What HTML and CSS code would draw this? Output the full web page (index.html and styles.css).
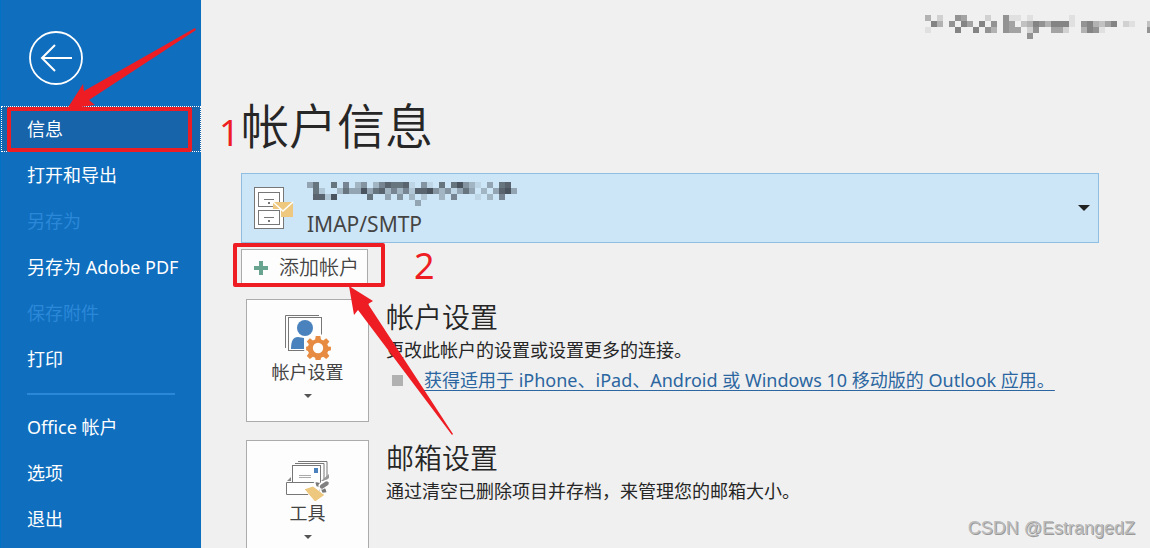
FILE: index.html
```html
<!DOCTYPE html>
<html lang="zh-CN">
<head>
    <meta charset="UTF-8">
    <meta name="viewport" content="width=device-width, initial-scale=1.0">
    <title>帐户信息 - Outlook</title>
    <link rel="stylesheet" href="styles.css">
</head>
<body>
    <div class="page">
        <nav class="sidebar">
            <button class="back-button" type="button" aria-label="返回">
                <svg width="54" height="54" viewBox="0 0 54 54" fill="none" stroke="#fff">
                    <circle cx="27" cy="27" r="26" stroke-width="1.8"/>
                    <path d="M43 27H13M26 14L13 27l13 13" stroke-width="2"/>
                </svg>
            </button>
            <a href="#" class="nav-item active">信息<span class="mark mark-info"></span></a>
            <a href="#" class="nav-item">打开和导出</a>
            <a class="nav-item disabled">另存为</a>
            <a href="#" class="nav-item">另存为 Adobe PDF</a>
            <a class="nav-item disabled">保存附件</a>
            <a href="#" class="nav-item">打印</a>
            <hr class="nav-divider">
            <a href="#" class="nav-item">Office 帐户</a>
            <a href="#" class="nav-item">选项</a>
            <a href="#" class="nav-item">退出</a>
        </nav>

        <main class="content">
            <header class="window-header">
                <svg class="mosaic" id="user-mosaic" width="225" height="24" fill="#555"></svg>
            </header>

            <h1 class="title">帐户信息</h1>

            <button class="account-select" type="button">
                <svg width="40" height="44" viewBox="0 0 40 44" fill="none" stroke="#777">
                    <rect x=".5" y="1.5" width="29" height="41" fill="#fff"/>
                    <rect x="4.5" y="6.5" width="21" height="14"/>
                    <path d="M10 13.5h10"/>
                    <path d="M14 16h2v2h-2z" fill="#777" stroke="none"/>
                    <path d="M19 16h20v15H19z" fill="#edc87e" stroke="none"/>
                    <path d="M19 16l10 9 10-9" stroke="#fff" stroke-width="1.5"/>
                    <path d="M3 23h24v17H3z" fill="#fff" stroke="none"/>
                    <rect x="4.5" y="24.5" width="21" height="14"/>
                    <path d="M10 31.5h10"/>
                    <path d="M14 34h2v2h-2z" fill="#777" stroke="none"/>
                </svg>
                <span class="account-text">
                    <svg class="mosaic" id="account-mosaic" width="216" height="24" fill="#3c444c"></svg>
                    <span class="account-type">IMAP/SMTP</span>
                </span>
                <span class="caret caret-large"></span>
            </button>

            <div class="add-row">
                <button class="add-button" type="button">
                    <svg width="14" height="14" viewBox="0 0 14 14"><path d="M5 0h4v5h5v4H9v5H5V9H0V5h5z" fill="#68a490"/></svg>
                    添加帐户
                </button>
                <span class="mark mark-add"></span>
            </div>

            <section class="setting">
                <button class="tile" type="button">
                    <svg width="48" height="46" viewBox="0 0 48 46">
                        <path d="M1.5 34V1.5H35" fill="none" stroke="#777"/>
                        <rect x="4.5" y="3.5" width="33" height="33" fill="#fff" stroke="#777"/>
                        <circle cx="21" cy="14" r="8" fill="#4a82bd"/>
                        <path d="M7 35c0-8 2-12 7-12l6 1v11z" fill="#4a82bd"/>
                        <circle cx="34" cy="34" r="14" fill="#fdfdfd"/>
                        <path d="M31.5 21h5l.7 4 2.400 1 3.300-2.300 3.400 3.400L44 30.400l1 2.400 3 .2v4l-3 .7-1 2.300 2.300 3.300-3.400 3.300-3.300-2.300-2.400 1-.7 3.700h-5l-.7-3.700-2.400-1-3.300 2.300-3.400-3.300L24 40l-1-2.300-2-.7v-4l2-.6 1-2-2.300-3.300 3.400-3.400 3.300 2.300 2.400-1z" fill="#e68b41" transform="translate(2.8 3) scale(.92 .9)"/>
                        <circle cx="34" cy="34" r="5.2" fill="#fdfdfd"/>
                    </svg>
                    <span class="tile-label">帐户设置</span>
                    <span class="caret"></span>
                </button>
                <div class="setting-text">
                    <h2>帐户设置</h2>
                    <p>更改此帐户的设置或设置更多的连接。</p>
                    <ul class="links">
                        <li><a href="#">获得适用于 iPhone、iPad、Android 或 Windows 10 移动版的 Outlook 应用。</a></li>
                    </ul>
                </div>
            </section>

            <section class="setting">
                <button class="tile" type="button">
                    <svg width="44" height="46" viewBox="0 0 44 46" fill="none" stroke="#777">
                        <path d="M12 6.5h29V23M9 8.5h29V24" />
                        <rect x="6.5" y="10.5" width="28" height="17" fill="#fff"/>
                        <path d="M13 20.5h12M13 22.5h12" stroke="#aaa"/>
                        <path d="M28 13h4v5h-4z" fill="#4a82bd" stroke="none"/>
                        <path d="M1 26l4-4v4z" fill="#888" stroke="none"/>
                        <path d="M35 26l8-7v4l-4 3z" fill="#999" stroke="none"/>
                        <path d="M.5 27.5h33v12H.5z" fill="#fff"/>
                        <path d="M18 34l9-3 12 9-10 7z" fill="#edc87e" stroke="#fff"/>
                        <path d="M29 29.500c3-1.500 9 4.500 9.500 8.500" stroke="#fff" stroke-width="6"/>
                        <path d="M30 29.500c3-1 8 4 8.500 8" stroke="#777" stroke-width="4"/>
                        <path d="M36 31l4-2.500" stroke="#fff" stroke-width="7" stroke-linecap="round"/>
                        <path d="M36 31.500l4.500-3" stroke="#808080" stroke-width="4.500" stroke-linecap="round"/>
                    </svg>
                    <span class="tile-label">工具</span>
                    <span class="caret"></span>
                </button>
                <div class="setting-text">
                    <h2>邮箱设置</h2>
                    <p>通过清空已删除项目并存档，来管理您的邮箱大小。</p>
                </div>
            </section>
        </main>

        <!-- Step markers -->
        <svg class="arrows" width="460" height="440" viewBox="0 0 460 440" fill="#ee1c23">
            <path d="M67 109L83 84l1 7L195 28l1 2L89 100l6 5z"/>
            <path d="M349 286l24 15-5 3 85 130-1 1-94-125-4 5z"/>
        </svg>
        <span class="step step-one">1</span>
        <span class="step step-two">2</span>
        <span class="watermark">CSDN @EstrangedZ</span>
    </div>

    <script src="script.js"></script>
</body>
</html>
```
FILE: styles.css
```css
* {
    box-sizing: border-box;
}

body {
    margin: 0;
    font-family: 'Noto Sans', 'Noto Sans CJK SC', sans-serif;
    font-size: 18px;
    line-height: 30px;
    color: #262626;
    background: #f0f0f0;
}

button {
    font: inherit;
    color: #444;
    padding: 0;
    cursor: pointer;
}

svg {
    display: block;
    flex-shrink: 0;
}

.page {
    position: relative;
    display: flex;
    height: 100vh;
    overflow: hidden;
}

/* Sidebar */
.sidebar {
    width: 201px;
    flex-shrink: 0;
    background: #106ebe;
    border-left: 1px solid #0072c6;
}

.back-button {
    display: block;
    margin: 31px 0 21px 28px;
    border: none;
    border-radius: 50%;
    background: none;
}

.nav-item {
    position: relative;
    display: flex;
    align-items: center;
    height: 46px;
    padding-left: 26px;
    color: #fff;
    text-decoration: none;
    white-space: nowrap;
}

.nav-item.active {
    background: #1864ab;
    outline: 1px dotted #fff;
    outline-offset: -1px;
}

.nav-item.disabled {
    color: #2b88d8;
}

.nav-divider {
    height: 2px;
    margin: 11px 26px 9px;
    border: none;
    background: #2b88d8;
}

/* Content */
.content {
    flex: 1;
    min-width: 0;
    padding-left: 40px;
}

.window-header {
    display: flex;
    justify-content: flex-end;
    height: 94px;
    padding-top: 15px;
}

.title {
    margin: 0 0 15px;
    font-size: 48px;
    line-height: 64px;
    font-weight: 350;
}

.account-select {
    display: flex;
    align-items: center;
    gap: 13px;
    width: calc(100% - 51px);
    height: 70px;
    padding: 0 8px 0 12px;
    border: 1px solid #8ebfe2;
    background: #cde6f7;
    text-align: left;
}

.account-text {
    flex: 1;
    padding-top: 4px;
}

.account-type {
    display: block;
    font-size: 21px;
    line-height: 28px;
    margin-top: 4px;
}

.caret {
    border: 4px solid transparent;
    border-top-color: #555;
    border-bottom: none;
}

.caret-large {
    border-width: 6px;
    border-top-color: #222;
    border-bottom: none;
}

.add-row {
    position: relative;
    margin: 6px 0 14px;
}

.add-button {
    display: flex;
    align-items: center;
    gap: 11px;
    width: 127px;
    height: 36px;
    padding: 2px 0 0 12px;
    border: 1px solid #ababab;
    background: #fdfdfd;
    font-size: 20px;
    font-weight: 350;
    white-space: nowrap;
}

.setting {
    display: flex;
    gap: 17px;
    margin: 0 0 18px 5px;
}

.tile {
    display: flex;
    flex-direction: column;
    align-items: center;
    flex-shrink: 0;
    width: 123px;
    height: 123px;
    padding-top: 14px;
    border: 1px solid #ababab;
    background: #fdfdfd;
}

.tile-label {
    line-height: 24px;
    margin-bottom: 10px;
}

.setting-text h2 {
    margin: 0;
    font-size: 28px;
    line-height: 36px;
    font-weight: 350;
}

.setting-text p {
    margin: 0;
}

.links {
    margin: 0;
    padding: 0;
    list-style: none;
}

.links li {
    display: flex;
    align-items: center;
    gap: 21px;
    padding-left: 6px;
}

.links li::before {
    content: '';
    width: 11px;
    height: 11px;
    background: #b1b1b1;
}

.links a {
    color: #2b66a0;
    text-underline-offset: 3px;
}

/* Step markers */
.mark {
    position: absolute;
    border: 4px solid #ee1c23;
    border-radius: 2px;
}

.mark-info {
    inset: 1px 9px 0 6px;
}

.mark-add {
    left: -8px;
    top: -6px;
    width: 152px;
    height: 44px;
}

.arrows {
    position: absolute;
    left: 0;
    top: 0;
    pointer-events: none;
}

.step {
    position: absolute;
    font-size: 36px;
    line-height: 40px;
    color: #ee1c23;
}

.step-one {
    left: 219px;
    top: 113px;
}

.step-two {
    left: 414px;
    top: 246px;
}

.watermark {
    position: absolute;
    right: 15px;
    bottom: 5px;
    font-family: 'Liberation Sans', sans-serif;
    color: #bbb;
    text-shadow: 1px 1px 0 #999;
}
```
FILE: script.js
```js
// Each digit is the ink strength of one 6px cell, a dot is an empty cell
const mosaics = {
    'user-mosaic': [
        '4.2..65...2..611.1......1',
        '.74.6.75.7.6.65.347647771.674357.21..3',
        '1....7..7.64.655.26..552..4761.......6',
        '.................6'
    ],
    'account-mosaic': [
        '47..7.6.35.3687781.51.7.79531.4.78',
        '.72..37449478363628895351474.3.4894',
        '.8829.....7..4.5.3.2..3.6...1.3.6',
        '..................4'
    ]
};

const CELL = 6;

for (const id in mosaics) {
    const svg = document.getElementById(id);
    mosaics[id].forEach((row, y) => {
        [...row].forEach((level, x) => {
            if (level === '.') return;
            const rect = document.createElementNS('http://www.w3.org/2000/svg', 'rect');
            rect.setAttribute('x', x * CELL);
            rect.setAttribute('y', y * CELL);
            rect.setAttribute('width', CELL);
            rect.setAttribute('height', CELL);
            rect.setAttribute('fill-opacity', level / 10);
            svg.appendChild(rect);
        });
    });
}
```
